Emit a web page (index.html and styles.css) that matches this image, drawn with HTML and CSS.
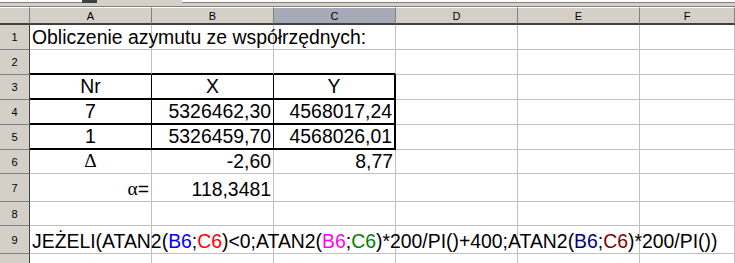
FILE: index.html
```html
<!DOCTYPE html>
<html lang="pl">
<head>
<meta charset="utf-8">
<title>Arkusz</title>
<link rel="stylesheet" href="styles.css">
</head>
<body>
<div class="bar">
  <div class="namebox"></div>
  <div class="namebtn"></div>
  <div class="gap"></div>
  <div class="formula"></div>
</div>
<div class="sheet">
  <div class="corner"></div>
  <div class="ch">A</div><div class="ch">B</div><div class="ch sel">C</div><div class="ch">D</div><div class="ch">E</div><div class="ch">F</div>

  <div class="rh">1</div>
  <div class="c l"><span class="txt">Obliczenie azymutu ze współrzędnych:</span></div><div class="c"></div><div class="c"></div><div class="c"></div><div class="c"></div><div class="c"></div>

  <div class="rh">2</div>
  <div class="c tb"></div><div class="c tb"></div><div class="c tb"></div><div class="c"></div><div class="c"></div><div class="c"></div>

  <div class="rh">3</div>
  <div class="c tb vr ctr">Nr</div><div class="c tb vr ctr">X</div><div class="c tb vre ctr">Y</div><div class="c"></div><div class="c"></div><div class="c"></div>

  <div class="rh">4</div>
  <div class="c tb vr ctr">7</div><div class="c tb vr r">5326462,30</div><div class="c tb vre r">4568017,24</div><div class="c"></div><div class="c"></div><div class="c"></div>

  <div class="rh">5</div>
  <div class="c tb vr ctr">1</div><div class="c tb vr r">5326459,70</div><div class="c tb vre r">4568026,01</div><div class="c"></div><div class="c"></div><div class="c"></div>

  <div class="rh">6</div>
  <div class="c ctr"><span class="sym">Δ</span></div><div class="c r">-2,60</div><div class="c r">8,77</div><div class="c"></div><div class="c"></div><div class="c"></div>

  <div class="rh">7</div>
  <div class="c r"><span class="sym">α</span>=</div><div class="c r">118,3481</div><div class="c"></div><div class="c"></div><div class="c"></div><div class="c"></div>

  <div class="rh">8</div>
  <div class="c"></div><div class="c"></div><div class="c"></div><div class="c"></div><div class="c"></div><div class="c"></div>

  <div class="rh">9</div>
  <div class="c l"><span class="txt">JEŻELI(ATAN2(<span class="k1">B6</span>;<span class="k2">C6</span>)&lt;0;ATAN2(<span class="k3">B6</span>;<span class="k4">C6</span>)*200/PI()+400;ATAN2(<span class="k5">B6</span>;<span class="k6">C6</span>)*200/PI())</span></div><div class="c"></div><div class="c"></div><div class="c"></div><div class="c"></div><div class="c"></div>

  <div class="rh"></div>
  <div class="c"></div><div class="c"></div><div class="c"></div><div class="c"></div><div class="c"></div><div class="c"></div>
</div>
</body>
</html>
```
FILE: styles.css
```css
html, body {
  margin: 0;
  padding: 0;
  background: #ffffff;
  overflow: hidden;
}

body {
  width: 735px;
  height: 263px;
  font-family: "Liberation Sans", Arial, sans-serif;
}

.bar {
  height: 7px;
  display: flex;
  background: #d4d0c8;
  box-sizing: border-box;
  border-bottom: 1px solid #808080;
}

.namebox {
  width: 82px;
  height: 2px;
  background: #ffffff;
  border-bottom: 1px solid #808080;
}

.namebtn {
  width: 15px;
  height: 3px;
  background: #404040;
}

.gap {
  width: 85px;
}

.formula {
  flex: 1;
  height: 2px;
  background: #ffffff;
  border-bottom: 1px solid #808080;
}

.sheet {
  display: grid;
  grid-template-columns: 30px repeat(5, 122px) 95px;
  grid-template-rows: 18px 25px 25px 25px 25px 25px 24px 28px 24px 28px 20px;
}

.sheet > div {
  box-sizing: border-box;
  min-width: 0;
}

.corner,
.ch {
  background: #d4d0c8;
  border-right: 1px solid #808080;
  border-bottom: 2px solid #404040;
  border-top: 1px solid #ffffff;
}

.ch {
  display: flex;
  align-items: center;
  justify-content: center;
  font-size: 11px;
  color: #000000;
}

.ch.sel {
  background: #a6aab6;
}

.rh {
  background: #d4d0c8;
  border-right: 1px solid #404040;
  border-bottom: 1px solid #808080;
  display: flex;
  align-items: center;
  justify-content: center;
  font-size: 11px;
  color: #000000;
}

.c {
  border-right: 1px solid #c0c0c0;
  border-bottom: 1px solid #c0c0c0;
  display: flex;
  align-items: flex-end;
  padding: 0 2px 1px 2px;
  font-size: 19.4px;
  line-height: 22px;
  color: #000000;
  white-space: nowrap;
}

.c.l {
  justify-content: flex-start;
  overflow: visible;
}

.c.ctr {
  justify-content: center;
}

.c.r {
  justify-content: flex-end;
}

.c.tb {
  border-bottom: 2px solid #000000;
}

.c.vr {
  border-right: 1px solid #000000;
}

.c.vre {
  border-right: 2px solid #000000;
}

.txt {
  position: relative;
  z-index: 1;
}

.sym {
  font-family: "Liberation Serif", "Times New Roman", serif;
}

.k1 { color: #0000ff; }
.k2 { color: #ff0000; }
.k3 { color: #ff00ff; }
.k4 { color: #008000; }
.k5 { color: #000080; }
.k6 { color: #800000; }
```
